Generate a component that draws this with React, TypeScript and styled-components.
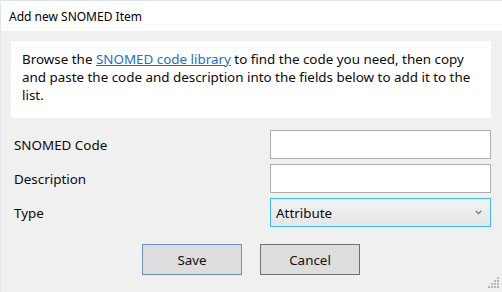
import React from 'react';
import styled, { createGlobalStyle } from 'styled-components';

const GlobalStyle = createGlobalStyle`
    html, body {
        margin: 0;
        padding: 0;
        background: #f0f0f0;
    }
`;

const Window = styled.div`
    width: 502px;
    height: 292px;
    box-sizing: border-box;
    display: flex;
    flex-direction: column;
    background: #f0f0f0;
    border-top: 1px solid #dbe2ea;
    border-left: 1px solid #e2e6ea;
    font-family: "Noto Sans", "Open Sans", sans-serif;
    color: #0a0a0a;
    overflow: hidden;
    position: relative;
`;

const TitleBar = styled.header`
    height: 30px;
    flex-shrink: 0;
    display: flex;
    align-items: center;
    padding-left: 8px;
    background: white;
    font-size: 12px;
    color: #000;
`;

const Body = styled.main`
    display: flex;
    flex-direction: column;
    padding: 10px 11px 0 10px;
`;

const InfoBox = styled.p`
    margin: 0;
    background: white;
    padding: 9px 11px 10px 11px;
    font-size: 13.4px;
    line-height: 18px;
    height: 58px;
`;

const Link = styled.a`
    color: #1a6fcf;
    text-decoration: underline;
`;

const Form = styled.div`
    display: grid;
    grid-template-columns: 1fr 221px;
    row-gap: 5px;
    margin-top: 12px;
    padding-left: 3px;
`;

const Label = styled.label`
    display: flex;
    align-items: center;
    font-size: 13.4px;
    height: 29px;
`;

const TextInput = styled.input`
    height: 29px;
    box-sizing: border-box;
    border: 1px solid #adadad;
    background: white;
    outline: none;
    margin: 0;
`;

const SelectBox = styled.div`
    height: 29px;
    box-sizing: border-box;
    border: 1px solid #3dbcf0;
    background: linear-gradient(#f2f2f2, #e6e6e6);
    display: flex;
    align-items: center;
    justify-content: space-between;
    padding: 0 8px 0 5px;
    font-size: 13.4px;
`;

const ButtonRow = styled.div`
    display: flex;
    justify-content: center;
    gap: 18px;
    margin-top: 17px;
`;

const Button = styled.button<{ primary?: boolean }>`
    width: 100px;
    height: 31px;
    box-sizing: border-box;
    background: #dddddd;
    border: 1px solid ${props => props.primary ? "#6a91bb" : "#707070"};
    font-family: inherit;
    font-size: 13.4px;
    color: #111;
    padding: 0;
`;

const Grip = styled.svg`
    position: absolute;
    right: 2px;
    bottom: 4px;
`;

function Chevron()
{
    return (
        <svg width="7" height="5" viewBox="0 0 7 5">
            <path d="M0.8 1 L3.5 3.6 L6.2 1" fill="none" stroke="#707070" strokeWidth="1.2" />
        </svg>
    );
}

export default function App()
{
    const dots = [[9, 1], [6, 4], [9, 4], [3, 7], [6, 7], [9, 7], [0, 10], [3, 10], [6, 10], [9, 10]];

    return (
        <React.Fragment>
            <GlobalStyle />
            <Window>
                <TitleBar>Add new SNOMED Item</TitleBar>
                <Body>
                    <InfoBox>
                        Browse the <Link href="#">SNOMED code library</Link> to find the code you need, then copy and paste the code and description into the fields below to add it to the list.
                    </InfoBox>
                    <Form>
                        <Label>SNOMED Code</Label>
                        <TextInput />
                        <Label>Description</Label>
                        <TextInput />
                        <Label>Type</Label>
                        <SelectBox>
                            <span>Attribute</span>
                            <Chevron />
                        </SelectBox>
                    </Form>
                    <ButtonRow>
                        <Button primary>Save</Button>
                        <Button>Cancel</Button>
                    </ButtonRow>
                </Body>
                <Grip width="12" height="12" viewBox="0 0 12 12">
                    {dots.map(([x, y], i) => <rect key={i} x={x} y={y} width="2" height="2" fill="#b5b5b5" />)}
                </Grip>
            </Window>
        </React.Fragment>
    );
}
